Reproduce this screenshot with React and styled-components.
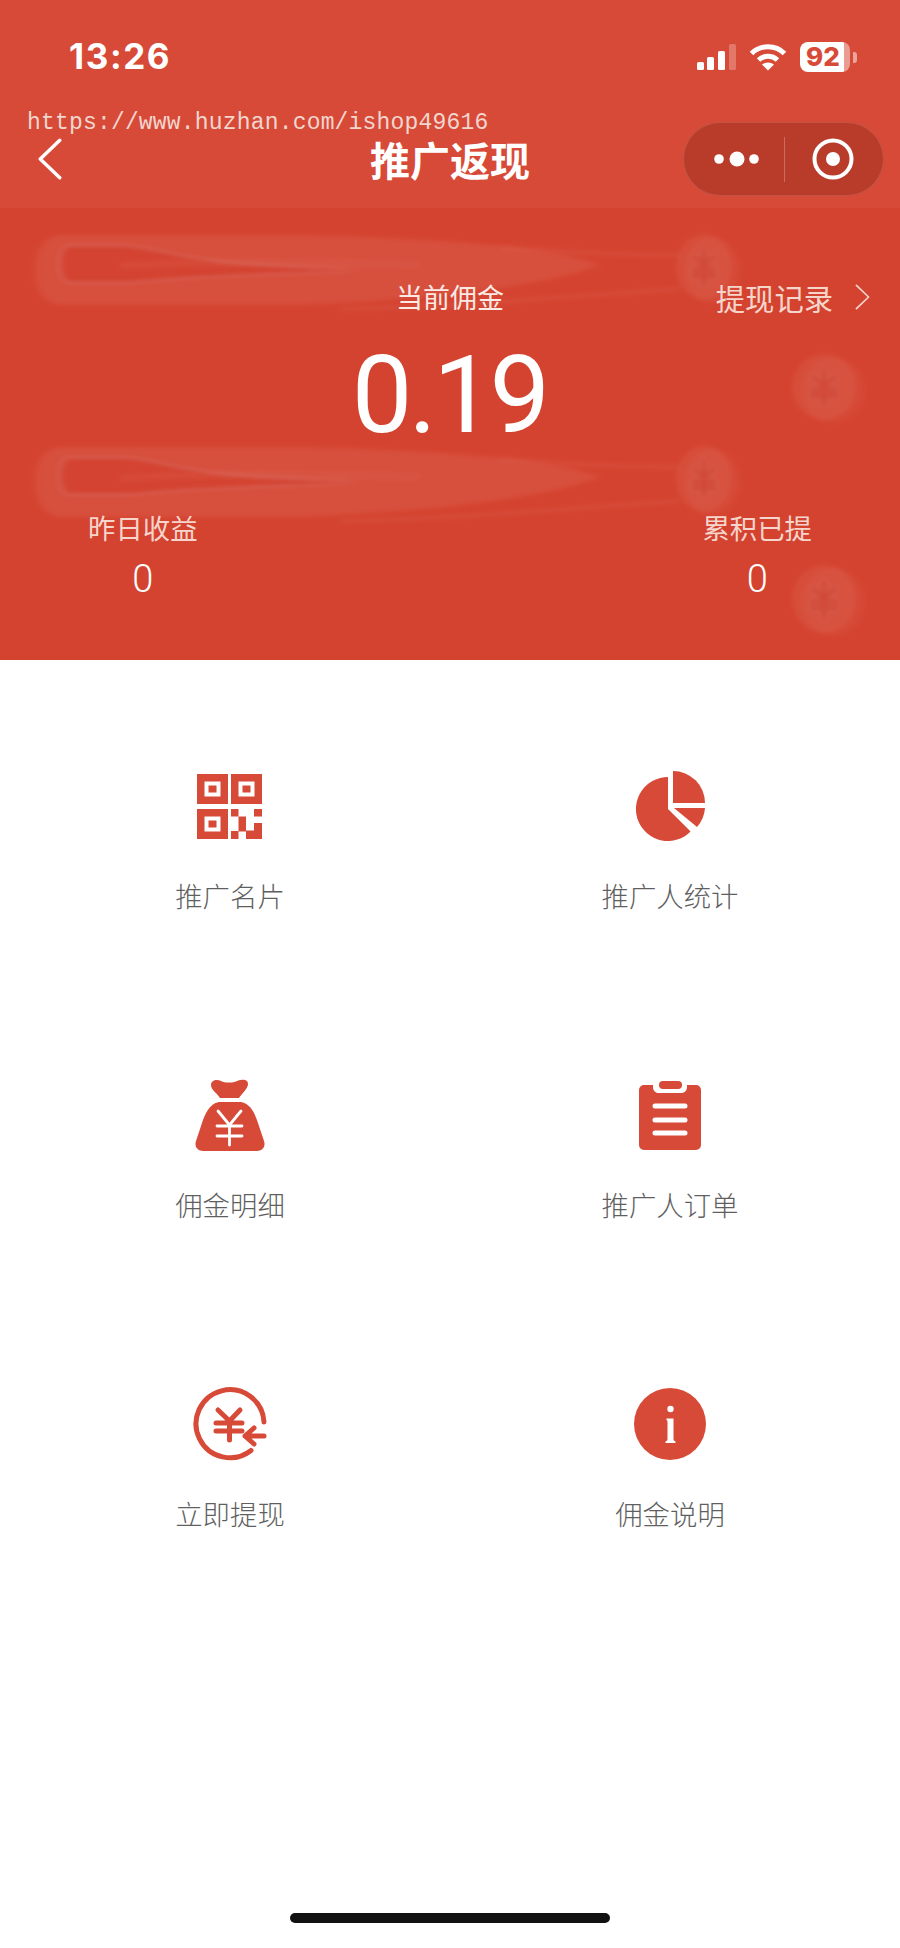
import React from "react";
import styled, { createGlobalStyle } from "styled-components";

const RED = "#d84a38";
const HERO_RED = "#d4432f";

const GlobalStyle = createGlobalStyle`
  * {
    box-sizing: border-box;
  }
  body {
    margin: 0;
    background: #fff;
    font-family: "Noto Sans CJK SC", "Noto Sans", sans-serif;
  }
`;

const menu = [
  { label: "推广名片", icon: <QrIcon /> },
  { label: "推广人统计", icon: <PieIcon /> },
  { label: "佣金明细", icon: <BagIcon /> },
  { label: "推广人订单", icon: <ClipboardIcon /> },
  { label: "立即提现", icon: <WithdrawIcon /> },
  { label: "佣金说明", icon: <InfoIcon /> },
];

function QrIcon() {
  const finder = (x, y) => (
    <g key={`${x}-${y}`}>
      <path
        fillRule="evenodd"
        d={`M${x} ${y}h31v30h-31zM${x + 7.5} ${y + 7.5}v15h16v-15z`}
      />
      <rect x={x + 11.5} y={y + 11.5} width="8" height="7" />
    </g>
  );
  return (
    <QrSvg width="65" height="65" viewBox="0 0 65 65" fill={RED}>
      {finder(0, 0)}
      {finder(34, 0)}
      {finder(0, 35)}
      <rect x="34" y="35" width="7.5" height="7.5" />
      <rect x="57" y="35" width="8" height="7.5" />
      <rect x="41.5" y="42.5" width="7.5" height="15" />
      <rect x="57" y="49" width="8" height="16" />
      <rect x="49" y="56.5" width="8" height="8.5" />
      <rect x="34" y="57" width="7.5" height="8" />
    </QrSvg>
  );
}

function PieIcon() {
  return (
    <svg width="70" height="71" viewBox="0 0 70 71" fill={RED}>
      <path d="M33 6A32 32 0 1 0 55.6 60.6L33 38Z" />
      <path d="M38 0A32 32 0 0 1 70 32H38Z" />
      <path d="M39 37H70A32 32 0 0 1 62 56Z" />
    </svg>
  );
}

function BagIcon() {
  return (
    <svg width="70" height="72" viewBox="0 0 70 72" fill={RED}>
      <path d="M16 6C16 1 22 0 26 2C30 4 38 4 42 2C47 0 53 0 53 5C53 10 47 14 44 19H25C22 14 16 11 16 6Z" />
      <path d="M24 23H46C56 25 60 35 63 44L69 62C71 68 67 72 62 72H8C3 72-1 68 1 62L7 44C10 35 14 25 24 23Z" />
      <path
        d="M23 32L34.5 46L46 32M22 47H47M22 57H47M34.5 46V66"
        fill="none"
        stroke="#fff"
        strokeWidth="2.8"
        strokeLinecap="round"
      />
    </svg>
  );
}

function ClipboardIcon() {
  return (
    <svg width="62" height="70" viewBox="0 0 62 70" fill={RED}>
      <rect x="20" y="1" width="23" height="8" rx="4" />
      <path d="M5 5H14V7C14 11 17 13 20 13H42C45 13 48 11 48 7V5H57A5 5 0 0 1 62 10V65A5 5 0 0 1 57 70H5A5 5 0 0 1 0 65V10A5 5 0 0 1 5 5Z" />
      <path
        d="M16 26H46M16 40H46M16 53H46"
        stroke="#fff"
        strokeWidth="5"
        strokeLinecap="round"
      />
    </svg>
  );
}

function WithdrawIcon() {
  return (
    <svg
      width="78"
      height="78"
      viewBox="0 0 78 78"
      fill="none"
      stroke={RED}
      strokeWidth="5"
      strokeLinecap="round"
      strokeLinejoin="round"
    >
      <path d="M73 37A34 34 0 1 0 60 65.5" />
      <path d="M27 25L38.5 36L49 25M25 38H51M25 46H51M38.5 36V55" />
      <path d="M73 51H54M63 43L54 51L63 59" />
    </svg>
  );
}

function InfoIcon() {
  return (
    <svg width="72" height="72" viewBox="0 0 72 72">
      <circle cx="36" cy="36" r="36" fill={RED} />
      <circle cx="36.5" cy="21" r="3.2" fill="#fff" />
      <path
        fill="#fff"
        d="M32.5 30.5H39.5V51C39.5 52.5 40.5 53 41.5 53.5V55H31.5V53.5C32.5 53 33.5 52.5 33.5 51V34C33.5 32.8 33.2 32.2 32.5 32Z"
      />
    </svg>
  );
}

function SignalIcon() {
  return (
    <svg width="39" height="26" viewBox="0 0 39 26" fill="#fff">
      <rect x="0" y="18" width="7" height="8" rx="1.5" />
      <rect x="10" y="13" width="7" height="13" rx="1.5" />
      <rect x="21" y="7" width="7" height="19" rx="1.5" />
      <rect x="32" y="0" width="7" height="26" rx="1.5" opacity="0.25" />
    </svg>
  );
}

function WifiIcon() {
  return (
    <svg width="38" height="28" viewBox="0 0 38 28" fill="none" stroke="#fff" strokeWidth="5">
      <path d="M2.5 10.5C11.5 1.5 26.5 1.5 35.5 10.5" />
      <path d="M9.5 17C15 12 23 12 28.5 17" />
      <path d="M19 27.5L13 21.5C16.5 18.8 21.5 18.8 25 21.5Z" fill="#fff" stroke="none" />
    </svg>
  );
}

function CapsuleDots() {
  return (
    <svg width="46" height="16" viewBox="0 0 46 16" fill="#fff">
      <circle cx="5" cy="8" r="4.8" />
      <circle cx="23" cy="8" r="7.5" />
      <circle cx="40" cy="8" r="4.8" />
    </svg>
  );
}

function CapsuleTarget() {
  return (
    <svg width="42" height="42" viewBox="0 0 42 42" fill="none">
      <circle cx="21" cy="21" r="18.5" stroke="#fff" strokeWidth="4" />
      <circle cx="21" cy="21" r="7" fill="#fff" />
    </svg>
  );
}

function Chevron({ left, width, height, strokeWidth }) {
  return (
    <svg
      width={width}
      height={height}
      viewBox="0 0 16 28"
      fill="none"
      stroke="currentColor"
      strokeWidth={strokeWidth}
      strokeLinecap="round"
      strokeLinejoin="round"
      preserveAspectRatio="none"
    >
      <path d={left ? "M14.5 1.5L1.5 14L14.5 26.5" : "M1.5 1.5L14.5 14L1.5 26.5"} />
    </svg>
  );
}

// one faint yen coin of the hero pattern, with a crescent edge on its right
function Coin({ x, y, rx, ry }) {
  return (
    <g transform={`translate(${x} ${y})`} filter="url(#soft)">
      <ellipse cx={rx * 0.3} cy="3" rx={rx} ry={ry} fill="#fff" opacity="0.03" />
      <ellipse cx="0" cy="0" rx={rx} ry={ry} fill="#fff" opacity="0.055" />
      <path
        d={`M${-rx * 0.4} ${-ry * 0.35}L0 ${-ry * 0.02}L${rx * 0.4} ${-ry * 0.35}M${-rx * 0.45} ${ry * 0.08}H${rx * 0.45}M${-rx * 0.45} ${ry * 0.28}H${rx * 0.45}M0 ${-ry * 0.55}V${ry * 0.6}`}
        fill="none"
        stroke="#c33a27"
        strokeOpacity="0.32"
        strokeWidth="5"
      />
    </g>
  );
}

// a coin dragged sideways into a long streak, drawn from y 0 to 75
function Streak({ y }) {
  return (
    <g transform={`translate(0 ${y})`}>
      <g filter="url(#smear)">
        <path
          d="M62 0H300C440 3 550 12 600 30C550 50 440 64 300 70H62C44 70 35 54 35 35C35 15 44 0 62 0Z"
          fill="#fff"
          opacity="0.065"
        />
        <path
          d="M68 11H125C150 13 180 24 240 29C300 33 340 34 360 35C300 38 190 40 130 47H68C58 42 58 16 68 11Z"
          fill={HERO_RED}
          opacity="0.9"
        />
        <path
          d="M120 31C200 26 300 26 420 30"
          fill="none"
          stroke="#fff"
          strokeOpacity="0.03"
          strokeWidth="8"
        />
        <path
          d="M500 12C570 18 620 20 680 20M340 74C450 72 560 62 680 54"
          fill="none"
          stroke="#fff"
          strokeOpacity="0.05"
          strokeWidth="4"
        />
      </g>
      <Coin x={704} y={32} rx={28} ry={33} />
    </g>
  );
}

function HeroPattern() {
  return (
    <Pattern viewBox="0 0 900 452" aria-hidden="true">
      <defs>
        <filter id="soft" x="-20%" y="-20%" width="140%" height="140%">
          <feGaussianBlur stdDeviation="2.2" />
        </filter>
        <filter id="smear" x="-5%" y="-20%" width="110%" height="140%">
          <feGaussianBlur stdDeviation="3.5 2" />
        </filter>
      </defs>
      <Streak y={27} />
      <Streak y={239} />
      <Coin x={824} y={179} rx={32} ry={33} />
      <Coin x={824} y={391} rx={32} ry={34} />
    </Pattern>
  );
}

export default function App() {
  return (
    <>
      <GlobalStyle />
      <Page>
        <Header>
          <StatusBar>
            <Clock>13:26</Clock>
            <StatusIcons>
              <SignalIcon />
              <WifiIcon />
              <Battery>
                <BatteryBody>92</BatteryBody>
                <BatteryNub />
              </Battery>
            </StatusIcons>
          </StatusBar>
          <Watermark>https://www.huzhan.com/ishop49616</Watermark>
          <NavBar>
            <BackButton>
              <Chevron left width={24} height={42} strokeWidth={2.3} />
            </BackButton>
            <NavTitle>推广返现</NavTitle>
            <Capsule>
              <CapsuleDots />
              <CapsuleLine />
              <CapsuleTarget />
            </Capsule>
          </NavBar>
        </Header>

        <Hero>
          <HeroPattern />
          <TopRow>
            <CurrentLabel>当前佣金</CurrentLabel>
            <RecordLink>
              提现记录
              <Chevron width={15} height={26} strokeWidth={1.8} />
            </RecordLink>
          </TopRow>
          <Amount>0.19</Amount>
          <StatRow>
            <Stat>
              <StatLabel>昨日收益</StatLabel>
              <StatValue>0</StatValue>
            </Stat>
            <Stat>
              <StatLabel>累积已提</StatLabel>
              <StatValue>0</StatValue>
            </Stat>
          </StatRow>
        </Hero>

        <Menu>
          {menu.map((item) => (
            <MenuItem key={item.label}>
              <MenuIcon>{item.icon}</MenuIcon>
              <MenuLabel>{item.label}</MenuLabel>
            </MenuItem>
          ))}
        </Menu>

        <HomeBar />
      </Page>
    </>
  );
}

const Page = styled.div`
  position: relative;
  display: flex;
  flex-direction: column;
  width: 900px;
  height: 1948px;
  background: #fff;
  overflow: hidden;
`;

const Header = styled.header`
  position: relative;
  height: 208px;
  background: ${RED};
  color: #fff;
`;

const StatusBar = styled.div`
  display: flex;
  align-items: flex-start;
  justify-content: space-between;
  height: 122px;
  padding: 36px 43px 0 69px;
`;

const Clock = styled.div`
  font-family: Inter, "Liberation Sans", sans-serif;
  font-size: 35px;
  font-weight: 700;
  letter-spacing: 1.6px;
  line-height: 40px;
`;

const StatusIcons = styled.div`
  display: flex;
  align-items: center;
  gap: 13px;
  margin-top: 6px;
`;

const Battery = styled.div`
  display: flex;
  align-items: center;
  gap: 3px;
`;

const BatteryBody = styled.div`
  width: 50px;
  height: 30px;
  border-radius: 8px;
  background: linear-gradient(to right, #fff 88%, rgba(255, 255, 255, 0.45) 88%);
  color: ${RED};
  font-family: Inter, "Liberation Sans", sans-serif;
  font-size: 26px;
  font-weight: 800;
  line-height: 30px;
  padding-left: 6px;
`;

const BatteryNub = styled.div`
  width: 4px;
  height: 11px;
  border-radius: 0 3px 3px 0;
  background: rgba(255, 255, 255, 0.5);
`;

const Watermark = styled.div`
  position: absolute;
  top: 108px;
  left: 27px;
  font-family: "Liberation Mono", monospace;
  font-size: 23px;
  letter-spacing: 0.18px;
  line-height: 30px;
  color: #f1d6ce;
  white-space: nowrap;
`;

const NavBar = styled.div`
  display: grid;
  grid-template-columns: 1fr auto 1fr;
  align-items: center;
  height: 74px;
  padding: 0 16px;
`;

const BackButton = styled.div`
  display: flex;
  align-items: center;
  justify-self: start;
  margin-left: 22px;
`;

const NavTitle = styled.h1`
  margin: 0;
  font-size: 40px;
  font-weight: 700;
  line-height: 50px;
`;

const Capsule = styled.div`
  display: flex;
  align-items: center;
  justify-content: space-between;
  justify-self: end;
  width: 201px;
  height: 74px;
  padding: 0 29px 0 30px;
  border-radius: 37px;
  background: #b93c2b;
  border: 1px solid rgba(255, 255, 255, 0.12);
`;

const CapsuleLine = styled.span`
  width: 1px;
  height: 45px;
  margin-right: 4px;
  background: rgba(255, 255, 255, 0.25);
`;

const Hero = styled.section`
  position: relative;
  height: 452px;
  padding-top: 73px;
  background: ${HERO_RED};
  color: #fff;
`;

const Pattern = styled.svg`
  position: absolute;
  inset: 0;
  width: 900px;
  height: 452px;
`;

const TopRow = styled.div`
  position: relative;
  display: grid;
  grid-template-columns: 1fr auto 1fr;
  align-items: center;
  height: 32px;
  padding: 0 30px;
`;

const CurrentLabel = styled.div`
  grid-column: 2;
  font-size: 27px;
  line-height: 32px;
  color: #fbe9e4;
`;

const RecordLink = styled.div`
  grid-column: 3;
  justify-self: end;
  display: flex;
  align-items: center;
  gap: 22px;
  font-size: 29.3px;
  line-height: 32px;
  color: #f6d5cc;
`;

const Amount = styled.div`
  position: relative;
  margin-top: 22px;
  padding-right: 2px;
  font-family: Roboto, "Liberation Sans", sans-serif;
  font-size: 108px;
  font-weight: 400;
  line-height: 120px;
  letter-spacing: -4px;
  text-align: center;
`;

const StatRow = styled.div`
  position: relative;
  display: flex;
  justify-content: space-between;
  margin-top: 56px;
  padding: 0 88px;
`;

const Stat = styled.div`
  display: flex;
  flex-direction: column;
  align-items: center;
  gap: 14px;
`;

const StatLabel = styled.div`
  font-size: 27.4px;
  line-height: 32px;
  color: #f6d5cc;
`;

const StatValue = styled.div`
  font-family: Roboto, "Liberation Sans", sans-serif;
  font-size: 38px;
  font-weight: 300;
  line-height: 44px;
`;

const Menu = styled.div`
  display: grid;
  grid-template-columns: 1fr 1fr;
  grid-auto-rows: 309px;
  padding: 110px 10px 0;
`;

const MenuItem = styled.div`
  display: flex;
  flex-direction: column;
  align-items: center;
`;

const MenuIcon = styled.div`
  display: flex;
  align-items: center;
  justify-content: center;
  height: 72px;
`;

const QrSvg = styled.svg`
  margin-right: 2px;
`;

const MenuLabel = styled.div`
  margin-top: 35px;
  font-size: 27.4px;
  font-weight: 300;
  line-height: 36px;
  color: #5f5f5f;
`;

const HomeBar = styled.div`
  width: 320px;
  height: 10px;
  margin: auto auto 25px;
  border-radius: 5px;
  background: #111;
`;
